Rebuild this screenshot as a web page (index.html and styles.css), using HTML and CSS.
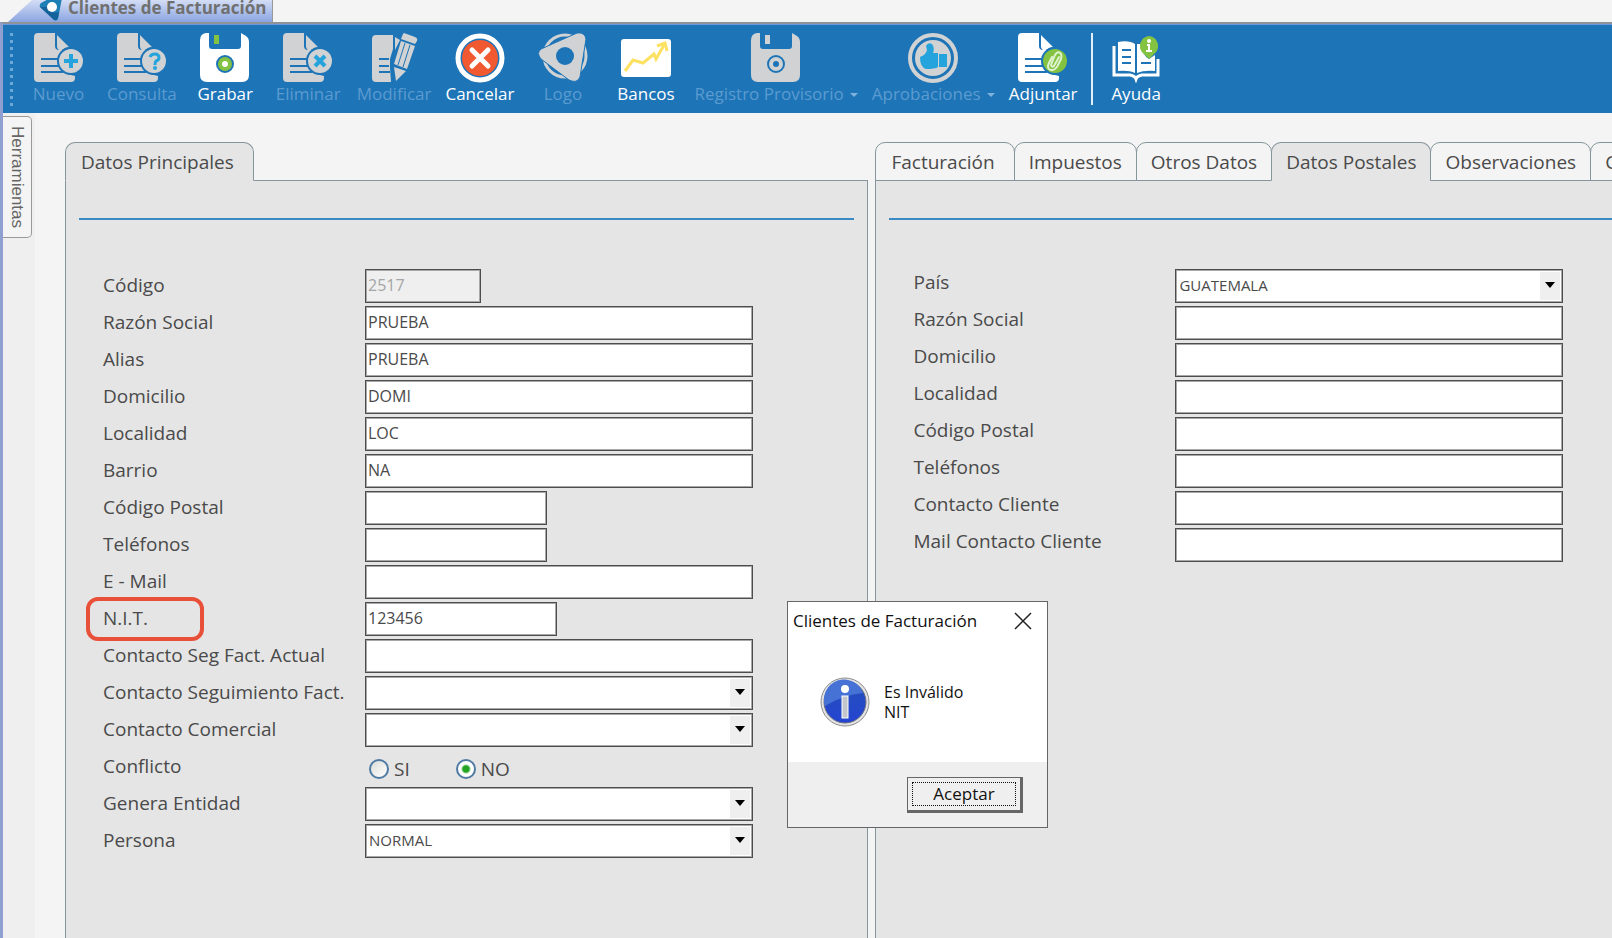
FILE: index.html
```html
<!DOCTYPE html>
<html lang="es">
<head>
    <meta charset="UTF-8">
    <meta name="viewport" content="width=device-width, initial-scale=1.0">
    <title>Clientes de Facturación</title>
    <link rel="stylesheet" href="styles.css">
</head>
<body>
    <svg class="defs" width="0" height="0" aria-hidden="true">
        <defs>
            <g id="doc">
                <path d="M4 0H21V13Q21 17 25 17H34V20A13 13 0 0 0 33 41L41 43V45Q41 49 37 49H4Q0 49 0 45V4Q0 0 4 0Z" fill="currentColor"/>
                <path d="M23 2L35 14Q31 14 28 17Q23 18 23 13Z" fill="currentColor"/>
                <path d="M7 26H26M7 33H26M7 39H29" stroke="#1d74b7" stroke-width="2"/>
                <circle cx="37" cy="28" r="14" fill="#1d74b7"/>
            </g>
            <g id="disk">
                <path d="M6 0H9V13Q9 16 12 16H38Q41 16 41 13V0L46 3Q49 5 49 9V42Q49 49 42 49H7Q0 49 0 42V7Q0 1 6 0Z" fill="currentColor"/>
            </g>
        </defs>
    </svg>

    <header class="windowBar">
        <h1 class="windowTab">
            <svg class="windowIcon" width="26" height="26" viewBox="0 0 26 26">
                <path d="M2 12Q1 10 3 8L22 -2Q25 0 24 3L20 24Q18 27 15 24Z" fill="#1c7fb5"/>
                <path d="M2 12L15 24Q18 27 20 23L21 17Q14 20 9 12Z" fill="#15629a"/>
                <circle cx="14" cy="12" r="5" fill="#fff"/>
            </svg>
            <span>Clientes de Facturación</span>
        </h1>
    </header>

    <div class="window">
        <nav class="toolbar">
            <span class="grip"></span>
            <button class="tool" disabled>
                <svg class="toolIcon" viewBox="0 0 50 50">
                    <use href="#doc"/>
                    <circle cx="37" cy="28" r="12" fill="currentColor"/>
                    <path d="M37 21V35M30 28H44" stroke="#25a3dc" stroke-width="4"/>
                </svg>
                <span>Nuevo</span>
            </button>
            <button class="tool" disabled>
                <svg class="toolIcon" viewBox="0 0 50 50">
                    <use href="#doc"/>
                    <circle cx="37" cy="28" r="12" fill="currentColor"/>
                    <path d="M33 24Q34 21 38 21Q42 21 42 25Q42 27 39 28Q38 29 38 32" fill="none" stroke="#25a3dc" stroke-width="3"/>
                    <circle cx="38" cy="35" r="2" fill="#25a3dc"/>
                </svg>
                <span>Consulta</span>
            </button>
            <button class="tool">
                <svg class="toolIcon" viewBox="0 0 50 50">
                    <use href="#disk"/>
                    <rect x="14" y="2" width="5" height="9" fill="#83c341"/>
                    <circle cx="25" cy="31" r="8" fill="#83c341" stroke="#1d74b7" stroke-width="2"/>
                    <circle cx="25" cy="31" r="3" fill="#fff"/>
                </svg>
                <span>Grabar</span>
            </button>
            <button class="tool" disabled>
                <svg class="toolIcon" viewBox="0 0 50 50">
                    <use href="#doc"/>
                    <circle cx="37" cy="28" r="12" fill="currentColor"/>
                    <path d="M32 23L42 33M42 23L32 33" stroke="#25a3dc" stroke-width="4"/>
                </svg>
                <span>Eliminar</span>
            </button>
            <button class="tool" disabled>
                <svg class="toolIcon" viewBox="0 0 50 50">
                    <path d="M7 2H24V16L21 26V35L22 49H7Q3 49 3 45V6Q3 2 7 2Z" fill="currentColor"/>
                    <path d="M26 4L31 7L26 17Z" fill="currentColor"/>
                    <path d="M10 26H20M10 33H20M10 39H21" stroke="#1d74b7" stroke-width="2"/>
                    <path d="M35 0L46 4Q49 5 48 8L46 11L32 6L34 1Z" fill="currentColor"/>
                    <path d="M32 8L46 13L38 36L25 31Z" fill="currentColor"/>
                    <path d="M36 10L29 32M41 12L34 34" stroke="#1d74b7" stroke-width="1"/>
                    <path d="M25 34L37 38L27 48Z" fill="currentColor"/>
                </svg>
                <span>Modificar</span>
            </button>
            <button class="tool">
                <svg class="toolIcon" viewBox="0 0 50 50">
                    <circle cx="25" cy="25" r="22" fill="none" stroke="#fff" stroke-width="5"/>
                    <circle cx="25" cy="25" r="18" fill="#f15a31"/>
                    <path d="M17 17L33 33M33 17L17 33" stroke="#fff" stroke-width="5" stroke-linecap="round"/>
                </svg>
                <span>Cancelar</span>
            </button>
            <button class="tool" disabled>
                <svg class="toolIcon" viewBox="0 0 50 50">
                    <circle cx="27" cy="23" r="21" fill="none" stroke="currentColor" stroke-width="3"/>
                    <path d="M3 16L39 0Q47 -1 48 6L42 44Q39 51 31 47L3 26Q-2 20 3 16Z" fill="currentColor" stroke="#1d74b7" stroke-width="1"/>
                    <circle cx="27" cy="23" r="9" fill="#1d74b7"/>
                </svg>
                <span>Logo</span>
            </button>
            <button class="tool">
                <svg class="toolIcon" viewBox="0 0 50 50">
                    <rect y="6" width="50" height="38" rx="3" fill="#fff"/>
                    <path d="M4 38L12 27L22 30L33 21L35 26L43 12" fill="none" stroke="#fde163" stroke-width="3"/>
                    <path d="M36 13L44 10L46 18" fill="none" stroke="#fde163" stroke-width="3"/>
                </svg>
                <span>Bancos</span>
            </button>
            <button class="tool" disabled>
                <svg class="toolIcon" viewBox="0 0 50 50">
                    <use href="#disk"/>
                    <rect x="14" y="2" width="5" height="9" fill="currentColor"/>
                    <circle cx="25" cy="31" r="8" fill="none" stroke="#1d74b7" stroke-width="2"/>
                    <circle cx="25" cy="31" r="3" fill="#1d74b7"/>
                </svg>
                <span class="toolMenu">Registro Provisorio</span>
            </button>
            <button class="tool" disabled>
                <svg class="toolIcon" viewBox="0 0 50 50">
                    <circle cx="25" cy="25" r="23" fill="none" stroke="currentColor" stroke-width="4"/>
                    <circle cx="25" cy="25" r="18" fill="currentColor"/>
                    <path d="M12 24Q18 22 19 17L18 13Q20 9 24 11Q27 15 25 20H30V34Q27 36 18 36Q12 34 12 24ZM31 21H39V34H31Z" fill="#25a3dc"/>
                </svg>
                <span class="toolMenu">Aprobaciones</span>
            </button>
            <button class="tool">
                <svg class="toolIcon" viewBox="0 0 50 50">
                    <use href="#doc"/>
                    <circle cx="37" cy="28" r="12" fill="#83c341"/>
                    <path d="M41 24L36 33Q34 35 33 32L37 22Q40 17 43 21Q44 23 43 26L39 34Q35 39 31 36Q29 34 31 30L34 24" fill="none" stroke="#e0f3cf" stroke-width="2" stroke-linecap="round"/>
                </svg>
                <span>Adjuntar</span>
            </button>
            <span class="separator"></span>
            <button class="tool">
                <svg class="toolIcon" viewBox="0 0 50 50">
                    <path d="M3 13V42H19Q24 43 25 46Q26 43 31 42H47V26" fill="none" stroke="#fff" stroke-width="3"/>
                    <path d="M7 9Q18 7 24 11V40Q18 37 7 38ZM26 11H30Q31 22 38 26L44 22V38Q33 37 26 40Z" fill="#fff"/>
                    <path d="M11 17H20M11 24H20M11 30H20M30 30H40" stroke="#1d74b7" stroke-width="2"/>
                    <path d="M38 3A10 10 0 0 1 43 21L38 26L33 21A10 10 0 0 1 38 3Z" fill="#83c341"/>
                    <circle cx="38" cy="8" r="2" fill="#fff"/>
                    <path d="M36 12H38V18M35 18H41" fill="none" stroke="#fff" stroke-width="2"/>
                </svg>
                <span>Ayuda</span>
            </button>
        </nav>

        <div class="content">
            <aside class="sidebar">
                <button class="sideTab">Herramientas</button>
            </aside>

            <main class="panels">
                <section class="panel">
                    <div class="tabs" role="tablist">
                        <button class="tab active" role="tab" aria-selected="true">Datos Principales</button>
                    </div>
                    <form class="panelBody">
                        <hr class="line">
                        <div class="row">
                            <label class="label" for="codigo">Código</label>
                            <input class="field tiny" id="codigo" type="text" value="2517" disabled>
                        </div>
                        <div class="row">
                            <label class="label" for="razon">Razón Social</label>
                            <input class="field" id="razon" type="text" value="PRUEBA">
                        </div>
                        <div class="row">
                            <label class="label" for="alias">Alias</label>
                            <input class="field" id="alias" type="text" value="PRUEBA">
                        </div>
                        <div class="row">
                            <label class="label" for="domicilio">Domicilio</label>
                            <input class="field" id="domicilio" type="text" value="DOMI">
                        </div>
                        <div class="row">
                            <label class="label" for="localidad">Localidad</label>
                            <input class="field" id="localidad" type="text" value="LOC">
                        </div>
                        <div class="row">
                            <label class="label" for="barrio">Barrio</label>
                            <input class="field" id="barrio" type="text" value="NA">
                        </div>
                        <div class="row">
                            <label class="label" for="cp">Código Postal</label>
                            <input class="field short" id="cp" type="text">
                        </div>
                        <div class="row">
                            <label class="label" for="telefonos">Teléfonos</label>
                            <input class="field short" id="telefonos" type="text">
                        </div>
                        <div class="row">
                            <label class="label" for="email">E - Mail</label>
                            <input class="field" id="email" type="text">
                        </div>
                        <div class="row">
                            <label class="label marked" for="nit">N.I.T.</label>
                            <input class="field medium" id="nit" type="text" value="123456">
                        </div>
                        <div class="row">
                            <label class="label" for="segActual">Contacto Seg Fact. Actual</label>
                            <input class="field" id="segActual" type="text">
                        </div>
                        <div class="row">
                            <label class="label" for="seguimiento">Contacto Seguimiento Fact.</label>
                            <div class="combo">
                                <select class="field" id="seguimiento"><option></option></select>
                            </div>
                        </div>
                        <div class="row">
                            <label class="label" for="comercial">Contacto Comercial</label>
                            <div class="combo">
                                <select class="field" id="comercial"><option></option></select>
                            </div>
                        </div>
                        <div class="row" role="radiogroup" aria-labelledby="conflicto">
                            <span class="label" id="conflicto">Conflicto</span>
                            <div class="radios">
                                <label class="option"><input class="radio" type="radio" name="conflicto">SI</label>
                                <label class="option"><input class="radio" type="radio" name="conflicto" checked>NO</label>
                            </div>
                        </div>
                        <div class="row">
                            <label class="label" for="entidad">Genera Entidad</label>
                            <div class="combo">
                                <select class="field" id="entidad"><option></option></select>
                            </div>
                        </div>
                        <div class="row">
                            <label class="label" for="persona">Persona</label>
                            <div class="combo">
                                <select class="field" id="persona"><option>NORMAL</option></select>
                            </div>
                        </div>
                    </form>
                </section>

                <section class="panel">
                    <div class="tabs" role="tablist">
                        <button class="tab" role="tab">Facturación</button>
                        <button class="tab" role="tab">Impuestos</button>
                        <button class="tab" role="tab">Otros Datos</button>
                        <button class="tab active" role="tab" aria-selected="true">Datos Postales</button>
                        <button class="tab" role="tab">Observaciones</button>
                        <button class="tab" role="tab">C</button>
                    </div>
                    <form class="panelBody postal">
                        <hr class="line">
                        <div class="row">
                            <label class="label" for="pais">País</label>
                            <div class="combo">
                                <select class="field" id="pais"><option>GUATEMALA</option></select>
                            </div>
                        </div>
                        <div class="row">
                            <label class="label" for="pRazon">Razón Social</label>
                            <input class="field" id="pRazon" type="text">
                        </div>
                        <div class="row">
                            <label class="label" for="pDomicilio">Domicilio</label>
                            <input class="field" id="pDomicilio" type="text">
                        </div>
                        <div class="row">
                            <label class="label" for="pLocalidad">Localidad</label>
                            <input class="field" id="pLocalidad" type="text">
                        </div>
                        <div class="row">
                            <label class="label" for="pCp">Código Postal</label>
                            <input class="field" id="pCp" type="text">
                        </div>
                        <div class="row">
                            <label class="label" for="pTelefonos">Teléfonos</label>
                            <input class="field" id="pTelefonos" type="text">
                        </div>
                        <div class="row">
                            <label class="label" for="pContacto">Contacto Cliente</label>
                            <input class="field" id="pContacto" type="text">
                        </div>
                        <div class="row">
                            <label class="label" for="pMail">Mail Contacto Cliente</label>
                            <input class="field" id="pMail" type="text">
                        </div>
                    </form>
                </section>
            </main>
        </div>
    </div>

    <dialog class="dialog" open>
        <div class="dialogTitle">
            <span>Clientes de Facturación</span>
            <button class="close" aria-label="Cerrar">
                <svg width="18" height="18" viewBox="0 0 18 18">
                    <path d="M1 1L17 17M17 1L1 17" stroke="#222" stroke-width="1.5"/>
                </svg>
            </button>
        </div>
        <div class="dialogBody">
            <svg width="50" height="50" viewBox="0 0 50 50">
                <defs>
                    <linearGradient id="ball" x1="0" y1="0" x2="0" y2="1">
                        <stop offset="0" stop-color="#2450b8"/>
                        <stop offset="1" stop-color="#2444d2"/>
                    </linearGradient>
                </defs>
                <circle cx="25" cy="25" r="24" fill="#e4e4e4" stroke="#8d8d8d" stroke-width="1"/>
                <circle cx="25" cy="25" r="21" fill="url(#ball)" stroke="#6c7080" stroke-width="1"/>
                <path d="M5 29A20 20 0 0 1 43 16Q23 18 5 29Z" fill="#4672d6"/>
                <circle cx="25" cy="12" r="4" fill="#fff"/>
                <rect x="22" y="19" width="6" height="22" fill="#c4c6ce" stroke="#fff" stroke-width="1"/>
            </svg>
            <p class="message">Es Inválido<br>NIT</p>
        </div>
        <div class="dialogFooter">
            <button class="accept"><span>Aceptar</span></button>
        </div>
    </dialog>
</body>
</html>
```

FILE: styles.css
```css
* {
    box-sizing: border-box;
}

body {
    margin: 0;
    min-height: 100vh;
    display: flex;
    flex-direction: column;
    background: #f4f4f4;
    color: #4a4a4a;
    font-family: "Open Sans", "Noto Sans", sans-serif;
    font-size: 18px;
    line-height: 24px;
    overflow: hidden;
}

button, input, select {
    font: inherit;
    color: inherit;
    margin: 0;
}

.defs {
    position: absolute;
}

.windowBar {
    height: 22px;
    display: flex;
    padding-left: 8px;
}

.windowTab {
    display: flex;
    align-items: center;
    margin: 0;
    height: 22px;
    padding: 0 6px 6px 30px;
    gap: 4px;
    font-size: 17px;
    line-height: 16px;
    color: #707070;
    white-space: nowrap;
    background: linear-gradient(#d3ddf4, #8ba5e2);
    border-right: 1px solid #999;
    clip-path: polygon(0 100%, 24px 0, 100% 0, 100% 100%);
}

.windowIcon {
    flex: none;
}

.window {
    flex: 1;
    display: flex;
    flex-direction: column;
    border-top: 2px solid #8f9299;
    border-left: 3px solid #8e9fd0;
}

/* toolbar */
.toolbar {
    display: flex;
    align-items: center;
    height: 89px;
    background: #1d74b7;
    border-top: 1px solid #6a98dc;
}

.grip {
    width: 3px;
    height: 73px;
    margin: 0 4px 0 7px;
    background: repeating-linear-gradient(#6da9d8 0 3px, #1d74b7 3px 7px);
}

.tool {
    display: flex;
    flex-direction: column;
    align-items: center;
    min-width: 83px;
    padding: 0 7px;
    border: 0;
    background: none;
    color: #fff;
    font-size: 17px;
    line-height: 22px;
    white-space: nowrap;
}

.tool:disabled {
    color: #5b9bd0;
}

.toolIcon {
    width: 50px;
    height: 50px;
}

.tool:disabled .toolIcon {
    color: #d0d2d3;
}

.toolMenu::after {
    content: "";
    display: inline-block;
    margin-left: 6px;
    border: 4px solid transparent;
    border-top-color: #7fb2de;
    border-bottom: 0;
    vertical-align: middle;
}

.separator {
    width: 2px;
    height: 72px;
    margin: 0 2px 0 6px;
    background: #e4eef7;
}

.content {
    flex: 1;
    display: flex;
}

.sidebar {
    width: 32px;
    padding-top: 3px;
    background: #efefef;
}

.sideTab {
    width: 29px;
    height: 122px;
    padding: 0;
    border: 1px solid #999;
    border-left: 0;
    border-radius: 0 5px 5px 0;
    background: #f4f4f4;
    color: #666;
    font-family: "Liberation Sans", Arial, sans-serif;
    font-size: 17px;
    line-height: 28px;
    writing-mode: vertical-rl;
}

/* panels */
.panels {
    flex: 1;
    display: grid;
    grid-template-columns: 12fr 11fr;
    gap: 7px;
    padding: 29px 0 0 30px;
    min-width: 0;
}

.panel {
    display: flex;
    flex-direction: column;
    min-width: 0;
}

.tabs {
    display: flex;
    overflow: hidden;
    margin-bottom: -1px;
    z-index: 1;
}

.tab {
    flex: none;
    height: 39px;
    padding: 0 14px;
    margin-right: -1px;
    border: 1px solid #85959c;
    border-radius: 10px 10px 0 0;
    background: #f4f4f4;
    font-size: 19px;
    white-space: nowrap;
}

.tab:first-child {
    padding: 0 19px 0 15px;
}

.tab.active {
    background: #e5e5e5;
    border-bottom-color: #e5e5e5;
}

.panelBody {
    flex: 1;
    padding: 37px 13px 0;
    background: #e5e5e5;
    border: 1px solid #85959c;
    border-bottom: 0;
}

.postal {
    border-right: 0;
    padding-right: 0;
}

.line {
    height: 2px;
    margin: 0 0 49px;
    border: 0;
    background: #3b8ac4;
}

.row {
    display: flex;
    align-items: center;
    height: 34px;
    margin: 0 0 3px 24px;
}

.label {
    flex: none;
    width: 262px;
    padding-bottom: 2px;
    font-size: 19px;
    white-space: nowrap;
}

.postal .label {
    padding-bottom: 8px;
}

/* red frame drawn around the label */
.marked {
    position: relative;
}

.marked::before {
    content: "";
    position: absolute;
    left: -17px;
    top: -9px;
    width: 110px;
    height: 36px;
    border: 4px solid #e8503a;
    border-radius: 12px;
}

.field {
    width: 100%;
    max-width: 388px;
    height: 34px;
    padding: 0 2px 2px;
    border: 1px solid #4d4d4d;
    border-radius: 0;
    box-shadow: inset 0 0 0 1px #a8a8a8;
    background: #fff;
    font-size: 16px;
}

.tiny {
    max-width: 116px;
}

.short {
    max-width: 182px;
}

.medium {
    max-width: 192px;
}

.field:disabled {
    background: #efefef;
    color: #a5a5a5;
}

.combo {
    position: relative;
    width: 100%;
    max-width: 388px;
}

.combo .field {
    display: block;
    padding-left: 3px;
    appearance: none;
    background: linear-gradient(#efefef, #efefef) right 2px center / 20px 28px no-repeat #fff;
    font-size: 15px;
}

.combo::after {
    content: "";
    position: absolute;
    right: 8px;
    top: 13px;
    border: 5px solid transparent;
    border-top: 6px solid #000;
    border-bottom: 0;
    pointer-events: none;
}

.radios {
    display: flex;
    gap: 46px;
    padding: 4px 0 0 4px;
}

.option {
    display: flex;
    align-items: center;
    gap: 5px;
    font-size: 19px;
}

.radio {
    appearance: none;
    width: 20px;
    height: 20px;
    border: 2px solid #4f7ba3;
    border-radius: 50%;
    background: linear-gradient(135deg, #dcdcd8, #fff);
}

.radio:checked {
    background: radial-gradient(circle, #23a423 0 3px, #fff 5px);
}

/* message box */
.dialog {
    position: absolute;
    left: 787px;
    top: 601px;
    width: 261px;
    margin: 0;
    padding: 0;
    border: 1px solid #666;
    background: #fff;
    color: #111;
    z-index: 10;
}

.dialogTitle {
    display: flex;
    justify-content: space-between;
    align-items: center;
    height: 38px;
    padding: 0 15px 0 5px;
    font-size: 17px;
    white-space: nowrap;
}

.close {
    display: flex;
    padding: 0;
    border: 0;
    background: none;
}

.dialogBody {
    display: flex;
    align-items: center;
    gap: 14px;
    height: 122px;
    padding: 2px 32px 0;
}

.message {
    margin: 0;
    font-size: 16px;
    line-height: 20px;
    white-space: nowrap;
}

.dialogFooter {
    display: flex;
    justify-content: flex-end;
    padding: 15px 24px 14px;
    background: #efefef;
}

.accept {
    width: 116px;
    height: 36px;
    padding: 4px;
    border: 1px solid #666;
    border-right: 3px solid #666;
    border-bottom: 3px solid #666;
    background: #efefef;
}

.accept span {
    display: block;
    border: 1px dotted #111;
    font-size: 17px;
    line-height: 22px;
}
```
